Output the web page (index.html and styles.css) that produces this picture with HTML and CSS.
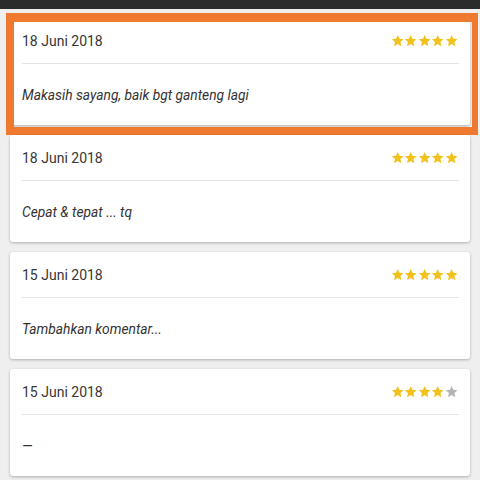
FILE: index.html
```html
<!DOCTYPE html>
<html lang="id">
<head>
<meta charset="utf-8">
<title>Ulasan</title>
<link rel="stylesheet" href="styles.css">
</head>
<body>
<div class="topbar"></div>
<main class="reviews">
  <article class="review is-marked">
    <header class="review-head">
      <span class="review-date">18 Juni 2018</span>
      <span class="stars" data-rating="5">
        <svg class="star on" viewBox="0 0 24 24"><path d="M12 1.8l3.1 6.9 7.4.7-5.6 5 1.7 7.4L12 17.9l-6.6 3.9 1.7-7.4-5.6-5 7.4-.7z"/></svg>
        <svg class="star on" viewBox="0 0 24 24"><path d="M12 1.8l3.1 6.9 7.4.7-5.6 5 1.7 7.4L12 17.9l-6.6 3.9 1.7-7.4-5.6-5 7.4-.7z"/></svg>
        <svg class="star on" viewBox="0 0 24 24"><path d="M12 1.8l3.1 6.9 7.4.7-5.6 5 1.7 7.4L12 17.9l-6.6 3.9 1.7-7.4-5.6-5 7.4-.7z"/></svg>
        <svg class="star on" viewBox="0 0 24 24"><path d="M12 1.8l3.1 6.9 7.4.7-5.6 5 1.7 7.4L12 17.9l-6.6 3.9 1.7-7.4-5.6-5 7.4-.7z"/></svg>
        <svg class="star on" viewBox="0 0 24 24"><path d="M12 1.8l3.1 6.9 7.4.7-5.6 5 1.7 7.4L12 17.9l-6.6 3.9 1.7-7.4-5.6-5 7.4-.7z"/></svg>
      </span>
    </header>
    <p class="review-text">Makasih sayang, baik bgt ganteng lagi</p>
    <div class="marker"></div>
  </article>

  <article class="review">
    <header class="review-head">
      <span class="review-date">18 Juni 2018</span>
      <span class="stars" data-rating="5">
        <svg class="star on" viewBox="0 0 24 24"><path d="M12 1.8l3.1 6.9 7.4.7-5.6 5 1.7 7.4L12 17.9l-6.6 3.9 1.7-7.4-5.6-5 7.4-.7z"/></svg>
        <svg class="star on" viewBox="0 0 24 24"><path d="M12 1.8l3.1 6.9 7.4.7-5.6 5 1.7 7.4L12 17.9l-6.6 3.9 1.7-7.4-5.6-5 7.4-.7z"/></svg>
        <svg class="star on" viewBox="0 0 24 24"><path d="M12 1.8l3.1 6.9 7.4.7-5.6 5 1.7 7.4L12 17.9l-6.6 3.9 1.7-7.4-5.6-5 7.4-.7z"/></svg>
        <svg class="star on" viewBox="0 0 24 24"><path d="M12 1.8l3.1 6.9 7.4.7-5.6 5 1.7 7.4L12 17.9l-6.6 3.9 1.7-7.4-5.6-5 7.4-.7z"/></svg>
        <svg class="star on" viewBox="0 0 24 24"><path d="M12 1.8l3.1 6.9 7.4.7-5.6 5 1.7 7.4L12 17.9l-6.6 3.9 1.7-7.4-5.6-5 7.4-.7z"/></svg>
      </span>
    </header>
    <p class="review-text">Cepat &amp; tepat ... tq</p>
  </article>

  <article class="review">
    <header class="review-head">
      <span class="review-date">15 Juni 2018</span>
      <span class="stars" data-rating="5">
        <svg class="star on" viewBox="0 0 24 24"><path d="M12 1.8l3.1 6.9 7.4.7-5.6 5 1.7 7.4L12 17.9l-6.6 3.9 1.7-7.4-5.6-5 7.4-.7z"/></svg>
        <svg class="star on" viewBox="0 0 24 24"><path d="M12 1.8l3.1 6.9 7.4.7-5.6 5 1.7 7.4L12 17.9l-6.6 3.9 1.7-7.4-5.6-5 7.4-.7z"/></svg>
        <svg class="star on" viewBox="0 0 24 24"><path d="M12 1.8l3.1 6.9 7.4.7-5.6 5 1.7 7.4L12 17.9l-6.6 3.9 1.7-7.4-5.6-5 7.4-.7z"/></svg>
        <svg class="star on" viewBox="0 0 24 24"><path d="M12 1.8l3.1 6.9 7.4.7-5.6 5 1.7 7.4L12 17.9l-6.6 3.9 1.7-7.4-5.6-5 7.4-.7z"/></svg>
        <svg class="star on" viewBox="0 0 24 24"><path d="M12 1.8l3.1 6.9 7.4.7-5.6 5 1.7 7.4L12 17.9l-6.6 3.9 1.7-7.4-5.6-5 7.4-.7z"/></svg>
      </span>
    </header>
    <p class="review-text">Tambahkan komentar...</p>
  </article>

  <article class="review">
    <header class="review-head">
      <span class="review-date">15 Juni 2018</span>
      <span class="stars" data-rating="4">
        <svg class="star on" viewBox="0 0 24 24"><path d="M12 1.8l3.1 6.9 7.4.7-5.6 5 1.7 7.4L12 17.9l-6.6 3.9 1.7-7.4-5.6-5 7.4-.7z"/></svg>
        <svg class="star on" viewBox="0 0 24 24"><path d="M12 1.8l3.1 6.9 7.4.7-5.6 5 1.7 7.4L12 17.9l-6.6 3.9 1.7-7.4-5.6-5 7.4-.7z"/></svg>
        <svg class="star on" viewBox="0 0 24 24"><path d="M12 1.8l3.1 6.9 7.4.7-5.6 5 1.7 7.4L12 17.9l-6.6 3.9 1.7-7.4-5.6-5 7.4-.7z"/></svg>
        <svg class="star on" viewBox="0 0 24 24"><path d="M12 1.8l3.1 6.9 7.4.7-5.6 5 1.7 7.4L12 17.9l-6.6 3.9 1.7-7.4-5.6-5 7.4-.7z"/></svg>
        <svg class="star off" viewBox="0 0 24 24"><path d="M12 1.8l3.1 6.9 7.4.7-5.6 5 1.7 7.4L12 17.9l-6.6 3.9 1.7-7.4-5.6-5 7.4-.7z"/></svg>
      </span>
    </header>
    <p class="review-text">—</p>
  </article>
</main>
</body>
</html>
```

FILE: styles.css
```css
html, body {
  margin: 0;
  padding: 0;
}

body {
  width: 480px;
  height: 480px;
  overflow: hidden;
  background: #efefef;
  font-family: Roboto, "Noto Sans", "Liberation Sans", sans-serif;
  color: #333;
}

.topbar {
  height: 9px;
  background: #2b2b2b;
}

.reviews {
  display: flex;
  flex-direction: column;
  gap: 10px;
  padding: 9px 10px 0;
}

.review {
  position: relative;
  height: 107px;
  display: flex;
  flex-direction: column;
  background: #fff;
  border-radius: 3px;
  box-shadow: 0 1px 3px rgba(0, 0, 0, 0.28);
}

.review-head {
  height: 45px;
  margin: 0 11px 0 12px;
  display: flex;
  align-items: center;
  justify-content: space-between;
  border-bottom: 1px solid #e4e4e4;
}

.review-date {
  font-size: 14px;
  color: #363636;
}

.stars {
  display: flex;
  margin-right: 1px;
}

.star {
  width: 13.4px;
  height: 13.4px;
  display: block;
}

.star.on {
  fill: #f1c21c;
}

.star.off {
  fill: #b4b4b4;
}

.review-text {
  flex: 1;
  margin: 0 12px;
  display: flex;
  align-items: center;
  font-size: 13.8px;
  font-style: italic;
  color: #333;
}

/* orange highlight frame drawn over the first card */
.marker {
  position: absolute;
  top: -5px;
  left: -4px;
  right: -8px;
  bottom: -10px;
  border-style: solid;
  border-color: #ef792f;
  border-width: 9px 6px 8px 8px;
  pointer-events: none;
}
```
